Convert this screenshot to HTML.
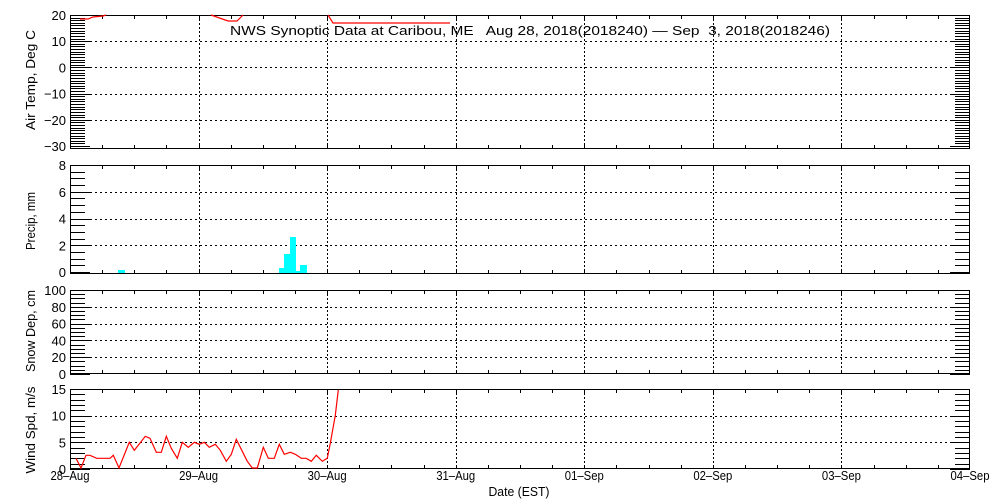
<!DOCTYPE html>
<html><head><meta charset="utf-8"><style>
html,body{margin:0;padding:0;background:#fff;}
svg{display:block;font-family:"Liberation Sans",sans-serif;font-size:13px;}
text{white-space:pre;}
</style></head><body>
<svg id="s" width="1000" height="500" xmlns="http://www.w3.org/2000/svg" shape-rendering="crispEdges">
<text x="230" y="35" textLength="600" lengthAdjust="spacingAndGlyphs" xml:space="preserve">NWS Synoptic Data at Caribou, ME   Aug 28, 2018(2018240) — Sep  3, 2018(2018246)</text>
<text transform="translate(35,80) rotate(-90)" text-anchor="middle" textLength="100" lengthAdjust="spacingAndGlyphs">Air Temp, Deg C</text>
<text transform="translate(35,221) rotate(-90)" text-anchor="middle" textLength="58" lengthAdjust="spacingAndGlyphs">Precip, mm</text>
<text transform="translate(35,331) rotate(-90)" text-anchor="middle" textLength="82" lengthAdjust="spacingAndGlyphs">Snow Dep, cm</text>
<text transform="translate(35,430) rotate(-90)" text-anchor="middle" textLength="87" lengthAdjust="spacingAndGlyphs">Wind Spd, m/s</text>
<text x="519" y="496" text-anchor="middle" textLength="61" lengthAdjust="spacingAndGlyphs">Date (EST)</text>
</svg>
<script>
var s=document.getElementById('s'),NS='http://www.w3.org/2000/svg';
function el(t,a,txt){var e=document.createElementNS(NS,t);for(var k in a)e.setAttribute(k,a[k]);if(txt!=null)e.textContent=txt;s.appendChild(e);return e;}
function ln(x1,y1,x2,y2,o){var a={x1:x1,y1:y1,x2:x2,y2:y2,stroke:'#000','stroke-width':1};for(var k in o)a[k]=o[k];return el('line',a);}
var L=70,R=970,dx=(R-L)/7;
var P=[{t:15,b:149,v0:20,v1:-30,y0:15,y1:146,minor:1,major:10,labels:[20,10,0,-10,-20,-30]},
{t:165,b:274,v0:8,v1:0,y0:165,y1:272,minor:0.5,major:2,labels:[8,6,4,2,0]},
{t:290,b:374,v0:100,v1:0,y0:290,y1:374,minor:5,major:20,labels:[100,80,60,40,20,0]},
{t:389,b:469,v0:15,v1:0,y0:389,y1:469,minor:1,major:5,labels:[15,10,5,0]}];
P.forEach(function(p){
 function Y(v){return p.y0+(p.v0-v)*(p.y1-p.y0)/(p.v0-p.v1);}
 for(var d=1;d<7;d++){var x=Math.round(L+d*dx)+0.5;ln(x,p.t,x,p.b,{'stroke-dasharray':'2,2'});}
 for(var q=1;q<28;q++){var x=Math.round(L+q*dx/4)+0.5;ln(x,p.t,x,p.t+4);ln(x,p.b-4,x,p.b);}
 var n=Math.round((p.v0-p.v1)/p.minor);
 for(var i=0;i<=n;i++){var v=p.v1+i*p.minor,y=Math.round(Y(v))+0.5;
  var maj=Math.abs(v/p.major-Math.round(v/p.major))<1e-6;
  var len=maj?20:15;
  ln(L,y,L+len,y);ln(R-len,y,R,y);
  if(maj&&v!==p.v0&&v!==p.v1)ln(L+20,y,R-20,y,{'stroke-dasharray':'2,3'});
 }
 p.labels.forEach(function(v){el('text',{x:66,y:Y(v)+5,'text-anchor':'end'},v<0?'−'+(-v):v);});
 el('rect',{x:L+0.5,y:p.t+0.5,width:R-L-1,height:p.b-p.t-1,fill:'none',stroke:'#000','stroke-width':1});
});
var days=['28-Aug','29-Aug','30-Aug','31-Aug','01-Sep','02-Sep','03-Sep','04-Sep'];
days.forEach(function(d,i){el('text',{x:L+i*dx,y:480,'text-anchor':'middle',textLength:39,lengthAdjust:'spacingAndGlyphs'},d.replace('-','–'));});
function pl(pts,c){el('polyline',{points:pts,fill:'none',stroke:c||'red','stroke-width':1.2,'shape-rendering':'auto'});}
pl('80,19 88,19 93,17 103,16 106,15');
pl('211,15 228,21 237,21 243,15');
pl('328,15 333,23 450,23');
[[118,125,270],[279,284,268],[284,290,254],[290,296,237],[296,300,271],[300,307,265]].forEach(function(b){el('rect',{x:b[0],y:b[2],width:b[1]-b[0],height:273-b[2],fill:'#00ffff'});});
var w=[[228,565],[243,597],[258,556],[270,556],[290,565],[330,565],[340,556],[357,597],[388,517],[403,541],[436,499],[450,505],[469,547],[484,547],[499,499],[514,535],[532,565],[547,517],[565,532],[583,517],[598,523],[613,517],[628,532],[646,523],[661,541],[679,574],[694,553],[709,508],[724,538],[742,574],[757,600],[772,600],[790,532],[805,565],[823,565],[838,523],[853,553],[871,547],[886,553],[904,565],[919,565],[934,574],[949,556],[967,574],[982,565],[991,520],[1006,436],[1015,360]];
pl(w.map(function(p){return (p[0]/3).toFixed(1)+','+(Math.min(p[1]/3+270,468)).toFixed(1);}).join(' '));
</script>
</body></html>
